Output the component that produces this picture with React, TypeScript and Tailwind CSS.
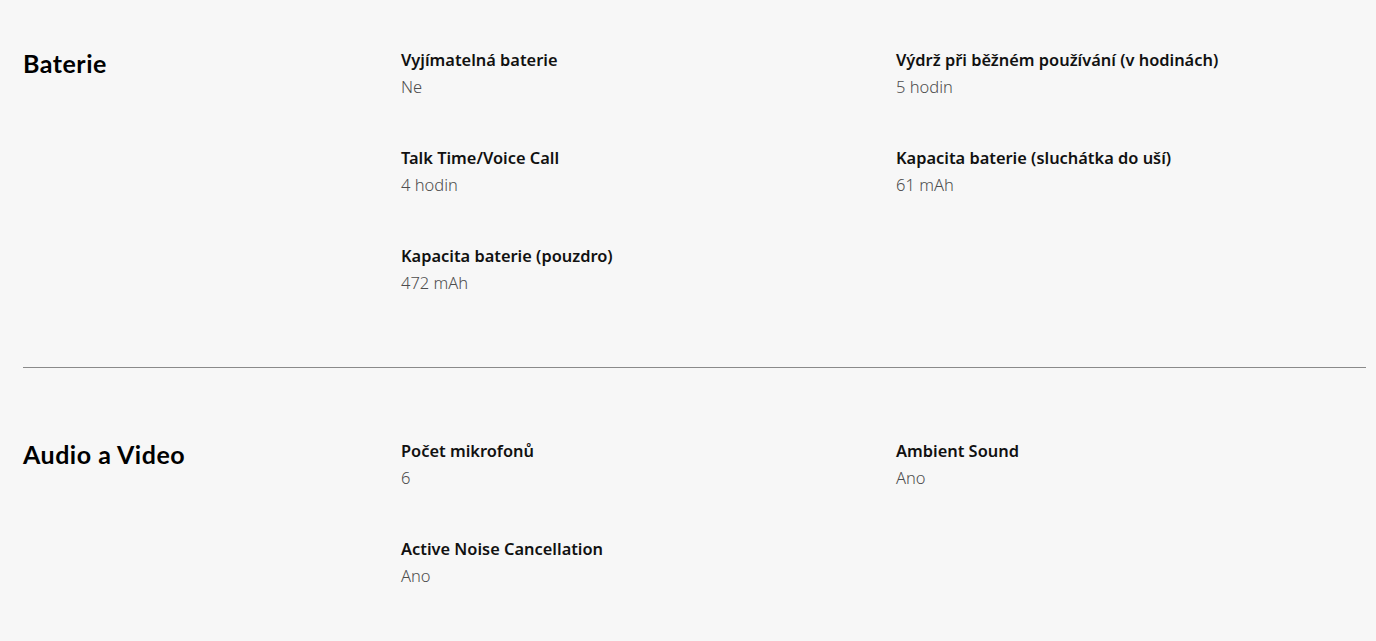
import React from 'react';

interface Spec {
    label: string;
    value: string;
}

interface Section {
    title: string;
    specs: Spec[];
}

const sections: Section[] = [
    {
        title: 'Baterie',
        specs: [
            { label: 'Vyjímatelná baterie', value: 'Ne' },
            { label: 'Výdrž při běžném používání (v hodinách)', value: '5 hodin' },
            { label: 'Talk Time/Voice Call', value: '4 hodin' },
            { label: 'Kapacita baterie (sluchátka do uší)', value: '61 mAh' },
            { label: 'Kapacita baterie (pouzdro)', value: '472 mAh' },
        ],
    },
    {
        title: 'Audio a Video',
        specs: [
            { label: 'Počet mikrofonů', value: '6' },
            { label: 'Ambient Sound', value: 'Ano' },
            { label: 'Active Noise Cancellation', value: 'Ano' },
        ],
    },
];

const App = () => {
    return (
        <div className="min-h-screen bg-[#f7f7f7] pl-[23px] pr-[10px]">
            {sections.map((section, i) => (
                <div key={section.title} className={i > 0 ? 'border-t border-[#8a8a8a]' : ''}>
                    <div className={`flex ${i === 0 ? 'pt-[46px] pb-[71px]' : 'pt-[69px] pb-[40px]'}`}>
                        <h2 className="w-[378px] shrink-0 text-[25px] leading-[34px] font-bold text-black tracking-[0.5px] font-['Lato',sans-serif]">
                            {section.title}
                        </h2>
                        <div className="grid flex-1 grid-cols-[495px_1fr] gap-y-[44px]">
                            {section.specs.map((spec) => (
                                <div key={spec.label} className="font-['Noto_Sans',sans-serif]">
                                    <p className="text-[16.4px] leading-[27px] font-semibold text-[#111]">{spec.label}</p>
                                    <p className="text-[16.5px] leading-[27px] font-light text-[#4d4d4d]">{spec.value}</p>
                                </div>
                            ))}
                        </div>
                    </div>
                </div>
            ))}
        </div>
    );
};

export default App;
